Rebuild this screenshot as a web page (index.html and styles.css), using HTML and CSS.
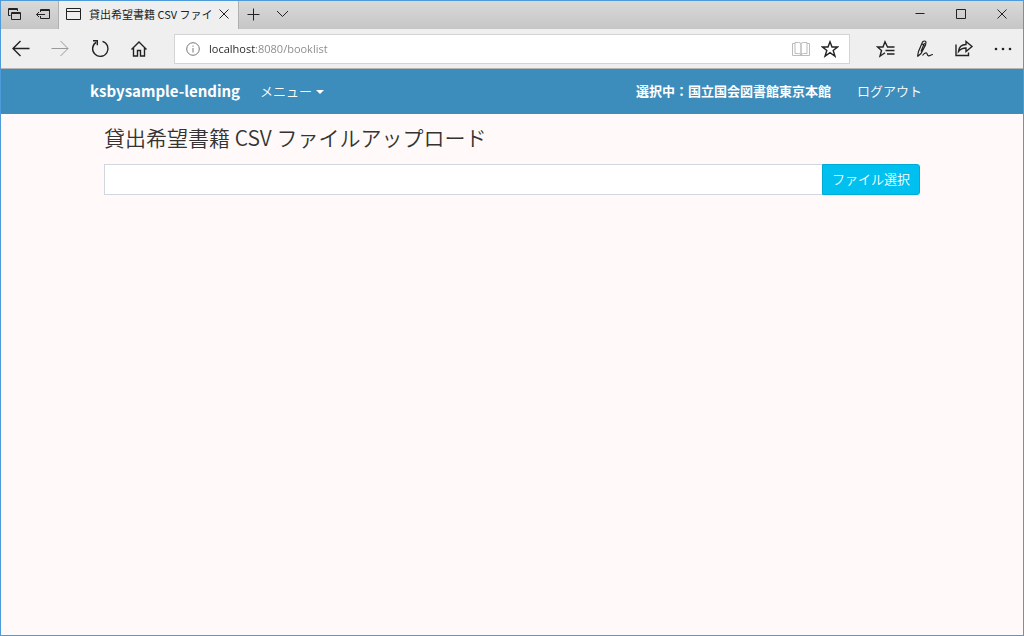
FILE: index.html
```html
<!DOCTYPE html>
<html lang="ja">
<head>
    <meta charset="UTF-8">
    <meta name="viewport" content="width=device-width, initial-scale=1.0">
    <title>貸出希望書籍 CSV ファイルアップロード</title>
    <link rel="stylesheet" href="styles.css">
</head>
<body>
    <div class="window">
        <!-- Tab strip -->
        <div class="tab-strip">
            <div class="tab-tools">
                <button class="icon-btn" aria-label="表示中のタブ">
                    <svg width="14" height="14" viewBox="0 0 14 14"><path d="M3.500 8.500H1.500V1.500H10.500V4M1.500 2.500H10.500M4.500 5.500H13.500V12.500H4.500ZM4.500 6.500H13.500"/></svg>
                </button>
                <button class="icon-btn" aria-label="タブを保存">
                    <svg width="16" height="14" viewBox="0 0 16 14"><path d="M5.500 5V2.500H14.500V11.500H5.500V9M5.500 3.500H14.500M1.500 7.500H10M4 5L1.500 7.500L4 10"/></svg>
                </button>
            </div>
            <div class="tab">
                <svg class="tab-icon" width="15" height="13" viewBox="0 0 15 13"><path d="M0.500 0.500H14.500V11.500H0.500ZM0.500 3.500H14.500"/></svg>
                <span class="tab-title">貸出希望書籍 CSV ファイ</span>
                <button class="icon-btn" aria-label="タブを閉じる">
                    <svg width="10" height="10" viewBox="0 0 10 10"><path d="M0.500 0.500L9.500 9.500M9.500 0.500L0.500 9.500"/></svg>
                </button>
            </div>
            <div class="tab-actions">
                <button class="icon-btn" aria-label="新しいタブ">
                    <svg width="13" height="13" viewBox="0 0 13 13"><path d="M6.500 0.500V12.500M0.500 6.500H12.500"/></svg>
                </button>
                <button class="icon-btn" aria-label="タブ一覧">
                    <svg width="13" height="8" viewBox="0 0 13 8"><path d="M1 1L6.500 6.500L12 1"/></svg>
                </button>
            </div>
            <div class="window-controls">
                <button class="icon-btn" aria-label="最小化">
                    <svg width="10" height="10" viewBox="0 0 10 10"><path d="M0.500 4.500H9.500"/></svg>
                </button>
                <button class="icon-btn" aria-label="最大化">
                    <svg width="10" height="10" viewBox="0 0 10 10"><path d="M0.500 0.500H9.500V9.500H0.500Z"/></svg>
                </button>
                <button class="icon-btn" aria-label="閉じる">
                    <svg width="10" height="10" viewBox="0 0 10 10"><path d="M0.500 0.500L9.500 9.500M9.500 0.500L0.500 9.500"/></svg>
                </button>
            </div>
        </div>

        <!-- Address bar -->
        <div class="toolbar">
            <div class="nav-buttons">
                <button class="icon-btn" aria-label="戻る">
                    <svg class="bold-icon" width="20" height="18" viewBox="0 0 20 18"><path d="M3 8.500H19.500M10.500 1L3 8.500L10.500 16"/></svg>
                </button>
                <button class="icon-btn" aria-label="進む" disabled>
                    <svg width="20" height="18" viewBox="0 0 20 18"><path d="M1.500 8.500H18M10.500 1L18 8.500L10.500 16"/></svg>
                </button>
                <button class="icon-btn" aria-label="更新">
                    <svg class="bold-icon" width="20" height="20" viewBox="0 0 20 20"><path d="M12.500 2.300A7.700 7.700 0 1 1 6 3.300L3.500 5.500M3 1.800H7.300V6.300"/></svg>
                </button>
                <button class="icon-btn" aria-label="ホーム">
                    <svg class="bold-icon" width="18" height="18" viewBox="0 0 18 18"><path d="M1.500 9.500L9 2L16.500 9.500M3.500 8V16H7.500V10.500H10.500V16H14.500V8"/></svg>
                </button>
            </div>
            <div class="address">
                <svg class="info-icon" width="14" height="14" viewBox="0 0 14 14"><circle cx="7" cy="7" r="6.300"/><path d="M7 6V10.500M7 3.500V4.700"/></svg>
                <input class="address-input" type="text" aria-label="アドレス" value="localhost:8080/booklist">
                <button class="icon-btn book" aria-label="読み取りビュー">
                    <svg width="18" height="16" viewBox="0 0 18 16"><path d="M3 1.500H6.500Q9 1.500 9 3V14Q9 12.500 6.500 12.500H3ZM15 1.500H11.500Q9 1.500 9 3V14Q9 12.500 11.500 12.500H15ZM3 2.500H0.500V14.500H17.500V2.500H15"/></svg>
                </button>
                <button class="icon-btn" aria-label="お気に入りに追加">
                    <svg class="bold-icon" width="18" height="18" viewBox="0 0 18 18"><path d="M9 1.800L11 7H16.500L12.200 10.500L14 16.200L9 12.700L4 16.200L5.800 10.500L1.500 7H7Z"/></svg>
                </button>
            </div>
            <div class="tool-buttons">
                <button class="icon-btn" aria-label="ハブ">
                    <svg class="bold-icon" width="20" height="18" viewBox="0 0 20 18"><path d="M11.500 7L9 1.800L7 7H1.500L5.500 10.500L4 16.200L9 12.700M11 7H18.500M9.500 10.500H18.500M11 14H18.500"/></svg>
                </button>
                <button class="icon-btn" aria-label="ノートの追加">
                    <svg class="pen-icon" width="18" height="18" viewBox="0 0 18 18"><path d="M1.500 16.500L2.500 11.500L6.500 2Q8.500 0 10 2L9.500 5L5 13.500L1.500 16.500M6 4L8.500 5.500M8.500 3L5 11.500M6.500 15.500C8 13.500 9.500 12.500 10.500 13S10.800 15.500 12.500 15.800S14.800 14.500 17 14.500"/></svg>
                </button>
                <button class="icon-btn" aria-label="共有">
                    <svg class="bold-icon" width="20" height="18" viewBox="0 0 20 18"><path d="M2 4.500V15.500H14.500V12.500M4.500 11.500C5 7 7.500 4.500 12 4.500V1.500L18 6.500L12 11.500V8C9 8 6.500 9 4.500 11.500Z"/></svg>
                </button>
                <button class="icon-btn" aria-label="設定など">
                    <svg class="dots" width="18" height="4" viewBox="0 0 18 4"><circle cx="2" cy="2" r="1.300"/><circle cx="9" cy="2" r="1.300"/><circle cx="16" cy="2" r="1.300"/></svg>
                </button>
            </div>
        </div>

        <!-- Page -->
        <header class="navbar">
            <div class="container">
                <a class="brand" href="#">ksbysample-lending</a>
                <button class="menu">メニュー<span class="caret"></span></button>
                <strong class="library">選択中：国立国会図書館東京本館</strong>
                <a class="logout" href="#">ログアウト</a>
            </div>
        </header>
        <main class="container content">
            <h1>貸出希望書籍 CSV ファイルアップロード</h1>
            <form class="upload">
                <input class="file-name" type="text" aria-label="ファイル名" readonly>
                <button class="btn-info" type="button">ファイル選択</button>
            </form>
        </main>
    </div>
</body>
</html>
```
FILE: styles.css
```css
* {
    margin: 0;
    padding: 0;
    box-sizing: border-box;
}

body {
    font-family: "Noto Sans CJK JP", "Noto Sans", sans-serif;
    font-size: 13px;
    font-weight: 350;
    color: #333;
}

button,
input {
    font: inherit;
    color: inherit;
    border: none;
    background: none;
}

a {
    color: inherit;
    text-decoration: none;
}

svg {
    display: block;
    fill: none;
    stroke: #222;
    stroke-width: 1;
}

.window {
    min-height: 100vh;
    border: 1px solid #4f9bd9;
    background: #fffaf9;
}

.icon-btn {
    display: flex;
    align-items: center;
    justify-content: center;
}

.bold-icon {
    stroke-width: 1.4;
}

.pen-icon {
    stroke-width: 1.2;
}

/* Tab strip */
.tab-strip {
    display: flex;
    height: 28px;
    background: linear-gradient(#d9d9d9, #c6c6c6);
}

.tab-tools {
    display: flex;
    align-items: center;
    gap: 14px;
    padding: 0 7px 2px 6px;
    border-right: 1px solid #b0b0b0;
}

.tab {
    display: flex;
    align-items: center;
    width: 179px;
    padding: 0 9px 2px 7px;
    background: #efefef;
}

.tab-title {
    flex: 1;
    margin: 0 4px 0 8px;
    overflow: hidden;
    font-size: 11px;
    font-weight: 400;
    line-height: 20px;
    white-space: nowrap;
    color: #222;
}

.tab-actions {
    display: flex;
    align-items: center;
    gap: 16px;
    padding: 0 8px 2px;
    border-left: 1px solid #b0b0b0;
}

.window-controls {
    display: flex;
    gap: 31px;
    margin-left: auto;
    padding: 0 16px 2px 0;
}

/* Address bar */
.toolbar {
    display: flex;
    align-items: center;
    height: 40px;
    background: #efefef;
    border-bottom: 1px solid #b5b5b5;
}

.nav-buttons {
    display: flex;
    gap: 20px;
    padding: 0 26px 0 9px;
}

.icon-btn:disabled svg {
    stroke: #999;
}

.address {
    display: flex;
    flex: 1;
    align-items: center;
    height: 30px;
    padding: 0 10px 0 11px;
    background: #fff;
    border: 1px solid #d4d4d4;
}

.info-icon {
    stroke: #777;
}

/* host name is darker than the rest of the address */
.address-input {
    flex: 1;
    margin: 0 9px;
    font-family: "Open Sans", "Noto Sans", sans-serif;
    font-size: 11px;
    font-weight: 400;
    color: transparent;
    background: linear-gradient(to right, #222 46px, #888 46px);
    background-clip: text;
    -webkit-background-clip: text;
}

.book {
    margin-right: 11px;
}

.book svg {
    stroke: #bbb;
}

.tool-buttons {
    display: flex;
    align-items: center;
    gap: 20px;
    padding: 0 11px 0 26px;
}

.dots {
    fill: #222;
    stroke: none;
}

/* Page */
.container {
    width: 100%;
    max-width: 844px;
    margin: 0 auto;
}

.navbar {
    background: #3c8dbc;
    color: #fff;
}

.navbar .container {
    display: flex;
    align-items: center;
    height: 45px;
    padding: 0 12px 2px 0;
}

.brand {
    font-size: 15px;
    font-weight: 700;
}

.menu {
    display: flex;
    align-items: center;
    gap: 4px;
    margin-left: 20px;
}

.caret {
    margin-top: 3px;
    border-top: 4px solid #fff;
    border-left: 4px solid transparent;
    border-right: 4px solid transparent;
}

.library {
    margin-left: auto;
    margin-right: 26px;
    font-weight: 700;
}

.content {
    padding: 8px 14px;
}

h1 {
    margin-bottom: 11px;
    font-size: 21px;
    font-weight: 350;
    line-height: 31px;
}

.upload {
    display: flex;
}

.file-name {
    flex: 1;
    height: 31px;
    padding: 0 10px;
    background: #fff;
    border: 1px solid #d2d6de;
    border-right: none;
}

.btn-info {
    height: 31px;
    padding: 0 9px 2px;
    color: #fff;
    background: #00c0ef;
    border: 1px solid #00acd6;
    border-radius: 0 3px 3px 0;
}
```
